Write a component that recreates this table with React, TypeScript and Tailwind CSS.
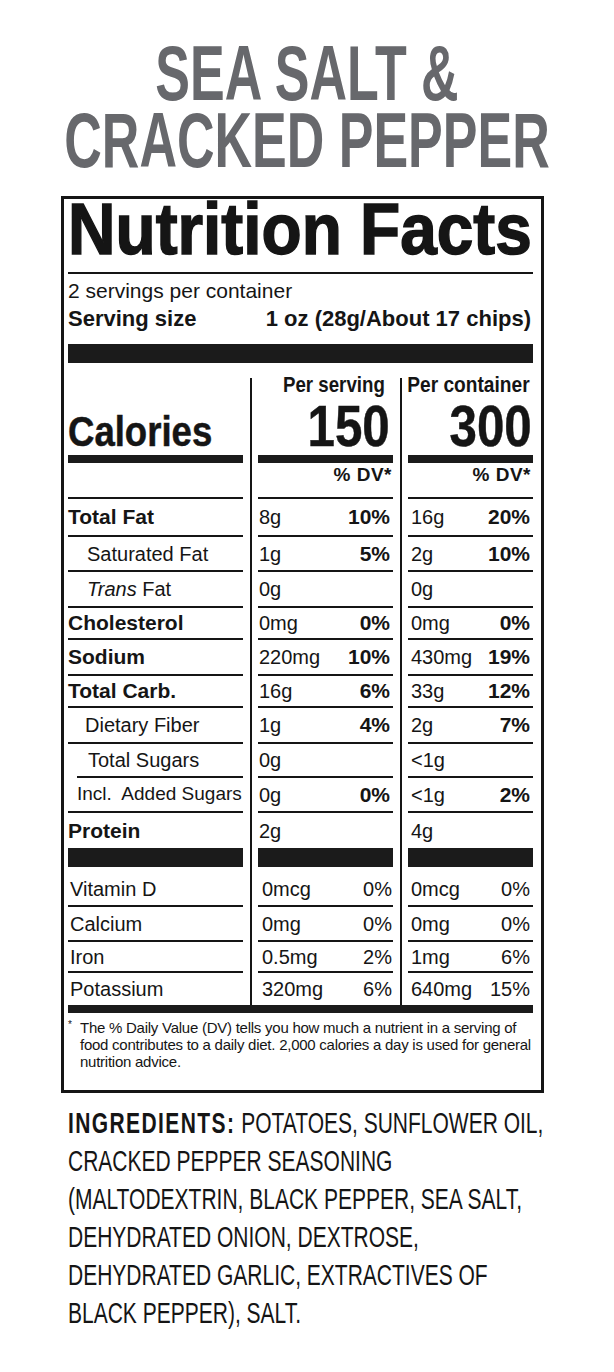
import React from "react";

type Nutrient = {
  label: React.ReactNode;
  labelCls: string;
  h: string;
  s: string;
  sp?: string;
  c: string;
  cp?: string;
  indentLine?: boolean;
  noLine?: boolean;
};

const macros: Nutrient[] = [
  { label: "Total Fat", labelCls: "font-bold text-[21px]", h: "h-[38px]", s: "8g", sp: "10%", c: "16g", cp: "20%" },
  { label: "Saturated Fat", labelCls: "pl-[19px] text-[20px]", h: "h-[35px]", s: "1g", sp: "5%", c: "2g", cp: "10%" },
  {
    label: (
      <span>
        <i>Trans</i> Fat
      </span>
    ),
    labelCls: "pl-[19px] text-[20px]",
    h: "h-[36px]",
    s: "0g",
    c: "0g",
  },
  { label: "Cholesterol", labelCls: "font-bold text-[21px]", h: "h-[32px]", s: "0mg", sp: "0%", c: "0mg", cp: "0%" },
  { label: "Sodium", labelCls: "font-bold text-[21px]", h: "h-[36px]", s: "220mg", sp: "10%", c: "430mg", cp: "19%" },
  { label: "Total Carb.", labelCls: "font-bold text-[21px]", h: "h-[32px]", s: "16g", sp: "6%", c: "33g", cp: "12%" },
  { label: "Dietary Fiber", labelCls: "pl-[17px] text-[20px]", h: "h-[36px]", s: "1g", sp: "4%", c: "2g", cp: "7%" },
  { label: "Total Sugars", labelCls: "pl-[11px] text-[20px]", h: "h-[34px]", s: "0g", c: "<1g", indentLine: true },
  { label: "Incl.\u00a0 Added Sugars", labelCls: "pl-[9px] text-[19px]", h: "h-[35px]", s: "0g", sp: "0%", c: "<1g", cp: "2%" },
  { label: "Protein", labelCls: "font-bold text-[21px]", h: "h-[35px]", s: "2g", c: "4g", noLine: true },
];

const minerals: Nutrient[] = [
  { label: "Vitamin D", labelCls: "pl-[2px] pt-[5px] text-[20px]", h: "h-[40px]", s: "0mcg", sp: "0%", c: "0mcg", cp: "0%" },
  { label: "Calcium", labelCls: "pl-[2px] text-[20px]", h: "h-[35px]", s: "0mg", sp: "0%", c: "0mg", cp: "0%" },
  { label: "Iron", labelCls: "pl-[2px] text-[20px]", h: "h-[31px]", s: "0.5mg", sp: "2%", c: "1mg", cp: "6%" },
  { label: "Potassium", labelCls: "pl-[2px] text-[20px]", h: "h-[32px]", s: "320mg", sp: "6%", c: "640mg", cp: "15%", noLine: true },
];

const ingredients: React.ReactNode[] = [
  <>
    <b className="tracking-[1.4px]">INGREDIENTS:</b> POTATOES, SUNFLOWER OIL,
  </>,
  "CRACKED PEPPER SEASONING",
  "(MALTODEXTRIN, BLACK PEPPER, SEA SALT,",
  "DEHYDRATED ONION, DEXTROSE,",
  "DEHYDRATED GARLIC, EXTRACTIVES OF",
  "BLACK PEPPER), SALT.",
];

function Divider({ top = false }: { top?: boolean }) {
  return (
    <div className="w-[15px] shrink-0 flex justify-center">
      <div className={`w-[2px] bg-[#151515] ${top ? "mt-[15px]" : ""}`} />
    </div>
  );
}

function MacroRow({ n }: { n: Nutrient }) {
  const line = n.noLine ? "" : "border-b-2 border-[#151515]";
  return (
    <div className={`flex ${n.h}`}>
      <div
        className={`flex items-center whitespace-nowrap ${line} ${n.labelCls} ${
          n.indentLine ? "ml-[9px] w-[166px]" : "w-[175px]"
        }`}
      >
        {n.label}
      </div>
      <Divider />
      <div className={`w-[135px] flex items-center justify-between pl-[1px] pr-[3px] ${line}`}>
        <span className="text-[20px]">{n.s}</span>
        {n.sp && <span className="text-[21px] font-bold">{n.sp}</span>}
      </div>
      <Divider />
      <div className={`w-[125px] flex items-center justify-between pl-[3px] pr-[3px] ${line}`}>
        <span className="text-[20px]">{n.c}</span>
        {n.cp && <span className="text-[21px] font-bold">{n.cp}</span>}
      </div>
    </div>
  );
}

function MineralRow({ n }: { n: Nutrient }) {
  const line = n.noLine ? "" : "border-b-2 border-[#151515]";
  const pad = n.h === "h-[40px]" ? "pt-[5px]" : "";
  return (
    <div className={`flex ${n.h} text-[20px]`}>
      <div className={`w-[175px] flex items-center ${line} ${n.labelCls}`}>{n.label}</div>
      <Divider />
      <div className={`w-[135px] flex items-center justify-between pl-[4px] pr-[1px] ${pad} ${line}`}>
        <span>{n.s}</span>
        <span>{n.sp}</span>
      </div>
      <Divider />
      <div className={`w-[125px] flex items-center justify-between pl-[3px] pr-[3px] ${pad} ${line}`}>
        <span>{n.c}</span>
        <span>{n.cp}</span>
      </div>
    </div>
  );
}

export default function App() {
  return (
    <div className="w-[614px] min-h-[1372px] bg-white font-['Liberation_Sans',Arial,sans-serif] text-[#151515]">
      {/* flavour title: narrow face made by stretching a smaller size vertically */}
      <div className="pt-[40px] flex flex-col items-center text-[#67686c]">
        <div className="h-[67px] flex justify-center items-start">
          <span className="whitespace-nowrap text-[52px] leading-[44px] font-bold origin-top scale-y-[1.5]">
            SEA SALT &amp;
          </span>
        </div>
        <div className="h-[67px] flex justify-center items-start">
          <span className="whitespace-nowrap text-[52px] leading-[44px] font-bold origin-top scale-y-[1.5]">
            CRACKED PEPPER
          </span>
        </div>
      </div>

      {/* label box */}
      <div className="mt-[22px] ml-[61px] w-[483px] border-[3px] border-[#151515] pl-[4px] pr-[8px]">
        <div className="h-[60px] flex">
          <span className="shrink-0 whitespace-nowrap text-[72px] leading-[60px] font-bold origin-left scale-x-[0.913] [-webkit-text-stroke:1.5px_#151515]">
            Nutrition Facts
          </span>
        </div>
        <div className="mt-[13px] h-[2px] bg-[#151515]" />
        <div className="mt-[3px] text-[21px] leading-[28px]">2 servings per container</div>
        <div className="flex justify-between text-[22px] leading-[28px] font-bold pr-[2px]">
          <span>Serving size</span>
          <span>1 oz (28g/About 17 chips)</span>
        </div>
        <div className="mt-[11px] h-[19px] bg-[#1b1b1b]" />

        {/* calories header */}
        <div className="flex h-[100px]">
          <div className="w-[175px] flex flex-col justify-end">
            <div className="flex h-[44px]">
              <span className="shrink-0 whitespace-nowrap text-[42px] leading-[44px] font-bold origin-left scale-x-[0.87] [-webkit-text-stroke:0.5px_#151515]">
                Calories
              </span>
            </div>
            <div className="mt-[1px] h-[8px] bg-[#1b1b1b]" />
          </div>
          <Divider top />
          <div className="w-[135px] flex flex-col">
            <div className="mt-[11px] h-[22px] flex justify-end pr-[8px]">
              <span className="shrink-0 whitespace-nowrap text-[22px] leading-[22px] font-bold origin-right scale-x-[0.85]">
                Per serving
              </span>
            </div>
            <div className="mt-[8px] h-[44px] flex justify-end pr-[3px]">
              <span className="shrink-0 text-[58px] leading-[44px] font-bold origin-right scale-x-[0.85] [-webkit-text-stroke:0.5px_#151515]">
                150
              </span>
            </div>
            <div className="mt-auto h-[8px] bg-[#1b1b1b]" />
          </div>
          <Divider top />
          <div className="w-[125px] flex flex-col">
            <div className="mt-[11px] h-[22px] flex justify-end pr-[3px]">
              <span className="shrink-0 whitespace-nowrap text-[22px] leading-[22px] font-bold origin-right scale-x-[0.87]">
                Per container
              </span>
            </div>
            <div className="mt-[8px] h-[44px] flex justify-end pr-[1px]">
              <span className="shrink-0 text-[58px] leading-[44px] font-bold origin-right scale-x-[0.85] [-webkit-text-stroke:0.5px_#151515]">
                300
              </span>
            </div>
            <div className="mt-auto h-[8px] bg-[#1b1b1b]" />
          </div>
        </div>

        {/* % DV row */}
        <div className="flex h-[36px] text-[19px] font-bold leading-[20px]">
          <div className="w-[175px] border-b-2 border-[#151515]" />
          <Divider />
          <div className="w-[135px] flex justify-end pt-[2px] pr-[1px] tracking-[0.5px] border-b-2 border-[#151515]">
            % DV*
          </div>
          <Divider />
          <div className="w-[125px] flex justify-end pt-[2px] pr-[2px] tracking-[0.5px] border-b-2 border-[#151515]">
            % DV*
          </div>
        </div>

        {macros.map((n, i) => (
          <MacroRow key={i} n={n} />
        ))}

        <div className="flex h-[19px]">
          <div className="w-[175px] bg-[#1b1b1b]" />
          <Divider />
          <div className="w-[135px] bg-[#1b1b1b]" />
          <Divider />
          <div className="w-[125px] bg-[#1b1b1b]" />
        </div>

        {minerals.map((n, i) => (
          <MineralRow key={i} n={n} />
        ))}

        <div className="h-[8px] bg-[#1b1b1b]" />

        {/* footnote */}
        <div className="flex pt-[6px] pb-[20px] text-[15px] leading-[17px] tracking-[-0.25px]">
          <span className="w-[12px] shrink-0 text-[10px] leading-[12px]">*</span>
          <div className="whitespace-nowrap">
            <div>The % Daily Value (DV) tells you how much a nutrient in a serving of</div>
            <div>food contributes to a daily diet. 2,000 calories a day is used for general</div>
            <div>nutrition advice.</div>
          </div>
        </div>
      </div>

      {/* ingredients */}
      <div className="mt-[11px] pl-[68px] pb-[20px] text-[21px]">
        {ingredients.map((line, i) => (
          <div key={i} className="h-[38px] flex items-start">
            <span className="whitespace-nowrap leading-[27px] origin-top scale-y-[1.385]">{line}</span>
          </div>
        ))}
      </div>
    </div>
  );
}
